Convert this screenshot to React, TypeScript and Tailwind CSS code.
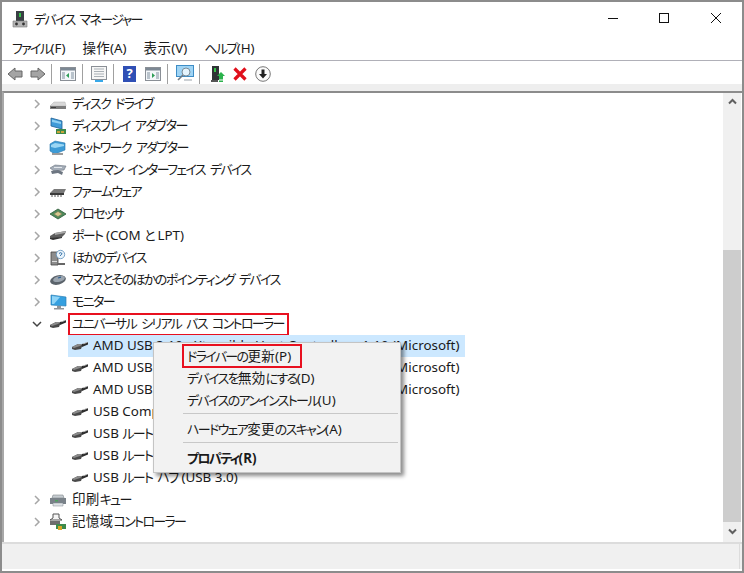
import React from "react";

const FONT = "[font-family:'Noto_Sans','Noto_Sans_CJK_JP',sans-serif] [font-feature-settings:'palt']";

/* Kana in the reference are condensed, kanji are full width, Latin is a little narrower. */
const T = ({ s }: { s: string }) => {
  const runs = s.match(/[\u3040-\u30ff]+|[\u4e00-\u9fff]+|[^\u3040-\u30ff\u4e00-\u9fff]+/g) ?? [];
  return (
    <>
      {runs.map((r, i) => {
        if (/^[\u3040-\u30ff]/.test(r))
          return (
            <span key={i} className="text-[13px] tracking-[-1.65px]">
              {r}
            </span>
          );
        if (/^[\u4e00-\u9fff]/.test(r))
          return (
            <span key={i} className="text-[13.5px] tracking-[0.3px]">
              {r}
            </span>
          );
        if (r === " ")
          return (
            <span key={i} className="text-[13.4px] [word-spacing:1.5px]">
              {r}
            </span>
          );
        return (
          <span key={i} className="text-[13.4px]">
            {r}
          </span>
        );
      })}
    </>
  );
};

const Chevron = ({ open }: { open?: boolean }) => (
  <svg width="10" height="10" viewBox="0 0 10 10" className="shrink-0">
    {open ? (
      <path d="M1 3 L5 7 L9 3" fill="none" stroke="#444" strokeWidth="1.5" />
    ) : (
      <path d="M3 1 L7 5 L3 9" fill="none" stroke="#a6a6a6" strokeWidth="1.5" />
    )}
  </svg>
);

const Usb = () => (
  <svg width="18" height="12" viewBox="0 0 18 12" className="shrink-0">
    <path d="M1 7 L7 4 L12 4 L10 9 L4 10 L1 9Z" fill="#4a4a4a" />
    <path d="M1 7 L7 4 L12 4 L9 6 L3 8Z" fill="#8a8a8a" />
    <path d="M11 4 L17 2 L17 4.5 L11 7Z" fill="#2c2c2c" />
    <path d="M12 3.4 L16.5 2 L16.5 2.8 L12 4.2Z" fill="#d0d0d0" />
  </svg>
);

const TreeIcon = ({ kind }: { kind: string }) => {
  const c = "shrink-0";
  switch (kind) {
    case "disk":
      return (
        <svg width="18" height="16" viewBox="0 0 18 16" className={c}>
          <path d="M1 10 L5 6 L16 6 L17 10Z" fill="#d8d8d8" stroke="#b5b5b5" strokeWidth=".5" />
          <path d="M1 10 H17 V13 H1Z" fill="#7d7d7d" />
          <path d="M2 11 H7 V12 H2Z" fill="#3c3c3c" />
        </svg>
      );
    case "display":
      return (
        <svg width="18" height="18" viewBox="0 0 18 18" className={c}>
          <path d="M2 1 L13 4 V12 L2 9Z" fill="#3e9bd8" stroke="#1e5f96" strokeWidth=".8" />
          <path d="M3 2.5 L12 5 V7 L3 5Z" fill="#8fd0f2" />
          <path d="M7 12 H17 V17 H7Z" fill="#3d8a4a" />
          <path d="M8 14 H11 V16 H8Z M12 14 H15 V16 H12Z" fill="#c9a43a" />
        </svg>
      );
    case "network":
      return (
        <svg width="18" height="16" viewBox="0 0 18 16" className={c}>
          <path d="M1 4 L6 1 L16 3 V10 L6 14 L1 11Z" fill="#3c9bd6" stroke="#2a77ad" strokeWidth=".6" />
          <path d="M2 5 L6 3 L15 4.5 V6 L6 8 L2 7Z" fill="#9ad6f4" />
          <path d="M3 13 H14 V15 H3Z" fill="#9b9b9b" />
        </svg>
      );
    case "hid":
      return (
        <svg width="18" height="14" viewBox="0 0 18 14" className={c}>
          <path d="M1 5 L6 2 L17 3 L15 7 L5 8Z" fill="#a4adb8" stroke="#6b7480" strokeWidth=".6" />
          <path d="M2 8 L9 7 L14 9 L13 12 L9 10 L3 11Z" fill="#6d7681" />
          <path d="M5 4 H13 V5 H5Z" fill="#e3e7ec" />
        </svg>
      );
    case "firmware":
      return (
        <svg width="18" height="12" viewBox="0 0 18 12" className={c}>
          <path d="M1 7 L5 3 L17 3 L15 7Z" fill="#7a7a7a" />
          <path d="M1 7 H15 V9 H1Z" fill="#3b3b3b" />
          <path d="M3 9 V11 M6 9 V11 M9 9 V11 M12 9 V11" stroke="#555" strokeWidth="1" />
        </svg>
      );
    case "cpu":
      return (
        <svg width="18" height="12" viewBox="0 0 18 12" className={c}>
          <path d="M1 6 L9 1 L17 6 L9 11Z" fill="#4f8a5b" stroke="#2e5c38" strokeWidth=".8" />
          <path d="M5 6 L9 3.5 L13 6 L9 8.5Z" fill="#d9c78f" stroke="#7d7450" strokeWidth=".5" />
        </svg>
      );
    case "port":
      return (
        <svg width="18" height="12" viewBox="0 0 18 12" className={c}>
          <path d="M1 6 L6 3 L17 1 L16 4 L13 7 L5 9 L1 8Z" fill="#5e5e5e" />
          <path d="M6 3 L17 1 L16 3 L6 5Z" fill="#a8a8a8" />
          <path d="M1 8 L13 7 V8 L4 10 L1 9Z" fill="#333" />
        </svg>
      );
    case "other":
      return (
        <svg width="16" height="18" viewBox="0 0 16 18" className={c}>
          <path d="M1 3 H8 V16 H1Z" fill="#8c8c8c" stroke="#444" strokeWidth=".8" />
          <path d="M2 12 H7 V13 H2Z" fill="#ddd" />
          <path d="M8 14 H15 V16 H8Z" fill="#666" />
          <circle cx="10.5" cy="5.5" r="4.2" fill="#e9f3fb" stroke="#5b8db8" strokeWidth=".8" />
          <path d="M9 4.5 Q10.5 2.8 12 4.5 Q12 5.5 10.5 6.2 V7" fill="none" stroke="#2f6ea5" strokeWidth="1" />
        </svg>
      );
    case "mouse":
      return (
        <svg width="18" height="12" viewBox="0 0 18 12" className={c}>
          <ellipse cx="9" cy="6" rx="8" ry="4.6" transform="rotate(-14 9 6)" fill="#5b636b" />
          <ellipse cx="10" cy="5" rx="6" ry="2.8" transform="rotate(-14 10 5)" fill="#9aa4ae" />
          <path d="M9 4 L12 3.2" stroke="#2f5f8f" strokeWidth="1.2" />
        </svg>
      );
    case "monitor":
      return (
        <svg width="17" height="17" viewBox="0 0 17 17" className={c}>
          <path d="M1 1 L16 3 V12 L1 11Z" fill="#35a0e0" stroke="#2c7fb5" strokeWidth=".7" />
          <path d="M2 2 L10 3 L4 10 L2 10Z" fill="#8fd4f7" />
          <path d="M7 12 H11 V14 H14 V15.5 H4 V14 H7Z" fill="#8f9499" />
        </svg>
      );
    case "printer":
      return (
        <svg width="18" height="14" viewBox="0 0 18 14" className={c}>
          <path d="M4 2 H14 L15 5 H3Z" fill="#c6ccd1" stroke="#7f868c" strokeWidth=".6" />
          <path d="M1 5 H17 V11 H1Z" fill="#7a8289" />
          <path d="M4 10 H14 V13 H4Z" fill="#dfe3e6" stroke="#7f868c" strokeWidth=".5" />
          <path d="M6 7 H9 V8.5 H6Z" fill="#4fa35e" />
        </svg>
      );
    case "storage":
      return (
        <svg width="18" height="18" viewBox="0 0 18 18" className={c}>
          <path d="M4 1 H10 V5 L13 7 H1 L4 5Z" fill="#f4f4f4" stroke="#555" strokeWidth="1" />
          <path d="M1 8 H11 V12 H1Z" fill="#6d6d6d" />
          <path d="M7 11 H17 V16 H7Z" fill="#3d8a4a" />
          <path d="M9 13 H13 V17 H9Z" fill="#d8a526" />
        </svg>
      );
    default:
      return <Usb />;
  }
};

const Row = ({ kind, label }: { kind: string; label: string }) => (
  <div className="flex h-[22px] items-center">
    <div className="flex w-[42px] justify-end pr-[4px]">
      <Chevron />
    </div>
    <div className="flex w-[24px] justify-center">
      <TreeIcon kind={kind} />
    </div>
    <span className="pb-[2px] pl-[2px] whitespace-nowrap">
      <T s={label} />
    </span>
  </div>
);

const ChildRow = ({ label, selected }: { label: string; selected?: boolean }) => (
  <div className="flex h-[22px] pl-[64px]">
    <div className={`flex w-[397px] items-center gap-[4px] pl-[3px] whitespace-nowrap ${selected ? "bg-[#cce8ff]" : ""}`}>
      <Usb />
      <span className="pb-[2px]">
        <T s={label} />
      </span>
    </div>
  </div>
);

const Sep = () => <div className="mx-[5px] h-[20px] w-px bg-[#a0a0a0]" />;

const Win = ({ side }: { side: "l" | "r" | "i" }) => (
  <svg width="16" height="14" viewBox="0 0 16 14">
    <rect x=".5" y=".5" width="15" height="13" fill="#f4f7fa" stroke="#8a8f96" />
    <rect x="1" y="1" width="14" height="2.5" fill="#7c8894" />
    <rect x="2" y="5" width="3" height="7" fill="#b9c3cc" />
    <rect x="11" y="5" width="3" height="7" fill="#b9c3cc" />
    {side === "l" && <path d="M9 6 V11 L6 8.5Z" fill="#2f9e58" />}
    {side === "r" && <path d="M7 6 V11 L10 8.5Z" fill="#2f9e58" />}
  </svg>
);

const MenuItem = ({ s, bold }: { s: string; bold?: boolean }) => (
  <div className={`flex h-[22px] items-center pt-[2px] pl-[33px] whitespace-nowrap ${bold ? "font-bold" : ""}`}>
    <span>
      <T s={s} />
    </span>
  </div>
);

export default function App() {
  return (
    <div className={`h-[573px] w-[744px] overflow-hidden border-2 border-[#8c8c8c] bg-white text-[14px] text-[#1a1a1a] ${FONT}`}>
      {/* title bar */}
      <div className="flex h-[34px] items-center">
        <svg width="16" height="18" viewBox="0 0 16 18" className="ml-[10px]">
          <rect x="4" y="1" width="8" height="10" fill="#3a3f44" />
          <rect x="7" y="3" width="2" height="4" fill="#37c24b" />
          <path d="M1 11 H15 V17 H1Z" fill="#b4b4b4" stroke="#777" strokeWidth=".6" />
          <circle cx="4.5" cy="14" r="1.4" fill="#333" />
          <circle cx="11.5" cy="14" r="1.4" fill="#333" />
        </svg>
        <span className="ml-[6px]">
          <T s="デバイス マネージャー" />
        </span>
        <div className="ml-auto flex items-center">
          <svg width="12" height="12" viewBox="0 0 12 12" className="mr-[39px] -mt-[2px]">
            <path d="M1 6.5 H11" stroke="#111" strokeWidth="1" />
          </svg>
          <svg width="12" height="12" viewBox="0 0 12 12" className="mr-[40px] -mt-[2px]">
            <rect x="1.5" y="1.5" width="9" height="9" fill="none" stroke="#111" />
          </svg>
          <svg width="12" height="12" viewBox="0 0 12 12" className="mr-[20px] -mt-[2px]">
            <path d="M1 1 L11 11 M11 1 L1 11" stroke="#111" strokeWidth="1" />
          </svg>
        </div>
      </div>
      {/* menu */}
      <div className="flex h-[25px] items-center gap-[17px] border-b border-[#b0b0b8] pl-[10px]">
        <span><T s="ファイル(F)" /></span>
        <span><T s="操作(A)" /></span>
        <span><T s="表示(V)" /></span>
        <span><T s="ヘルプ(H)" /></span>
      </div>
      {/* toolbar */}
      <div className="flex h-[23px] items-center pl-[5px] pt-[2px]">
        <svg width="16" height="14" viewBox="0 0 16 14"><path d="M1 7 L8 1 V4 H15 V10 H8 V13Z" fill="#a4a4a4" stroke="#666" /></svg>
        <svg width="16" height="14" viewBox="0 0 16 14" className="ml-[7px]"><path d="M15 7 L8 1 V4 H1 V10 H8 V13Z" fill="#a4a4a4" stroke="#666" /></svg>
        <Sep />
        <div className="ml-[3px]"><Win side="l" /></div>
        <div className="ml-[1px]"><Sep /></div>
        <svg width="16" height="16" viewBox="0 0 16 16" className="ml-[3px]">
          <rect x=".5" y=".5" width="15" height="13" fill="#f6f6f6" stroke="#8a8f96" />
          <path d="M3 3 H13 M3 5.5 H13 M3 8 H13 M3 10.5 H13" stroke="#a9b0b6" />
          <path d="M4 14 H12 V16 H4Z" fill="#38a8e8" />
        </svg>
        <div className="ml-[1px]"><Sep /></div>
        <div className="ml-[4px] flex h-[16px] w-[13px] items-center justify-center bg-[#2f4fb5] text-[13px] leading-none font-bold text-white">?</div>
        <div className="ml-[9px]"><Win side="r" /></div>
        <div className="ml-[1px]"><Sep /></div>
        <svg width="18" height="17" viewBox="0 0 18 17" className="ml-[3px]">
          <rect x=".5" y=".5" width="17" height="11" fill="#9fd4f5" stroke="#3e8dc6" />
          <circle cx="10" cy="7" r="4" fill="#e5f4fd" stroke="#7b8b97" />
          <path d="M7 10 L2 15" stroke="#6f7a84" strokeWidth="1.6" />
          <path d="M8 15 H16" stroke="#9aa2a9" />
        </svg>
        <Sep />
        <svg width="14" height="16" viewBox="0 0 14 16" className="ml-[6px]">
          <rect x="1" y="0" width="7" height="14" fill="#2f3336" />
          <rect x="3" y="2" width="2" height="4" fill="#37c24b" />
          <path d="M10 6 L14 10 H12 V13 H8 V10 H6Z" fill="#2bb24c" />
          <path d="M0 14 H7 V16 H0Z" fill="#555" />
          <path d="M8 14 H12 M8 15.5 H12" stroke="#2bb24c" />
        </svg>
        <svg width="14" height="14" viewBox="0 0 14 14" className="ml-[8px]">
          <path d="M1.5 1.5 L12.5 12.5 M12.5 1.5 L1.5 12.5" stroke="#e0101c" strokeWidth="3.2" />
        </svg>
        <svg width="16" height="16" viewBox="0 0 16 16" className="ml-[8px]">
          <circle cx="8" cy="8" r="7.3" fill="#fbfbfb" stroke="#777" />
          <path d="M6.5 3.5 H9.5 V8 H12 L8 12.5 L4 8 H6.5Z" fill="#222" />
        </svg>
      </div>
      {/* band */}
      <div className="h-[7px] bg-[#eeeeee]" />
      {/* tree area */}
      <div className="relative flex h-[451px] border-t-2 border-l-2 border-t-[#8c8c8c] border-l-[#a8a8a8]">
        <div className="min-w-0 flex-1 overflow-hidden">
          <Row kind="disk" label="ディスク ドライブ" />
          <Row kind="display" label="ディスプレイ アダプター" />
          <Row kind="network" label="ネットワーク アダプター" />
          <Row kind="hid" label="ヒューマン インターフェイス デバイス" />
          <Row kind="firmware" label="ファームウェア" />
          <Row kind="cpu" label="プロセッサ" />
          <Row kind="port" label="ポート (COM と LPT)" />
          <Row kind="other" label="ほかのデバイス" />
          <Row kind="mouse" label="マウスとそのほかのポインティング デバイス" />
          <Row kind="monitor" label="モニター" />
          <div className="flex h-[22px] items-center">
            <div className="flex w-[42px] justify-end pr-[4px]">
              <Chevron open />
            </div>
            <div className="flex w-[24px] justify-center">
              <Usb />
            </div>
            <span className="-ml-[2px] flex h-[23px] w-[221px] shrink-0 items-center border-2 border-[#e8101f] pb-[2px] pl-[2px] whitespace-pre">
              <span>
                <T s="ユニバーサル シリアル バス コントローラー" />
              </span>
            </span>
          </div>
          <ChildRow selected label="AMD USB 3.10 eXtensible Host Controller - 1.10 (Microsoft)" />
          <ChildRow label="AMD USB 3.10 eXtensible Host Controller - 1.10 (Microsoft)" />
          <ChildRow label="AMD USB 3.10 eXtensible Host Controller - 1.10 (Microsoft)" />
          <ChildRow label="USB Composite Device" />
          <ChildRow label="USB ルート ハブ (USB 3.0)" />
          <ChildRow label="USB ルート ハブ (USB 3.0)" />
          <ChildRow label="USB ルート ハブ (USB 3.0)" />
          <Row kind="printer" label="印刷キュー" />
          <Row kind="storage" label="記憶域コントローラー" />
        </div>
        {/* scrollbar */}
        <div className="mr-[1px] flex w-[18px] flex-col bg-[#f0f0f0]">
          <div className="flex h-[17px] items-center justify-center">
            <svg width="9" height="7" viewBox="0 0 9 7"><path d="M1 5.5 L4.5 2 L8 5.5" fill="none" stroke="#606060" strokeWidth="2" /></svg>
          </div>
          <div className="mt-[140px] h-[272px] bg-[#cdcdcd]" />
          <div className="flex h-[19px] items-center justify-center">
            <svg width="9" height="7" viewBox="0 0 9 7"><path d="M1 1.5 L4.5 5 L8 1.5" fill="none" stroke="#606060" strokeWidth="2" /></svg>
          </div>
        </div>
        {/* context menu */}
        <div className="absolute top-[249px] left-[149px] h-[131px] w-[248px] border border-[#c4c4c4] bg-[#f2f2f2] py-[1px] shadow-[3px_3px_4px_rgba(0,0,0,0.45)]">
          <div className="relative">
            <MenuItem s="ドライバーの更新(P)" />
            <div className="absolute top-[0px] left-[28px] h-[24px] w-[120px] border-2 border-[#e8101f]" />
          </div>
          <MenuItem s="デバイスを無効にする(D)" />
          <MenuItem s="デバイスのアンインストール(U)" />
          <div className="my-[3px] ml-[29px] mr-[2px] h-px bg-[#c8c8c8]" />
          <MenuItem s="ハードウェア変更のスキャン(A)" />
          <div className="my-[3px] ml-[29px] mr-[2px] h-px bg-[#c8c8c8]" />
          <MenuItem s="プロパティ(R)" bold />
        </div>
      </div>
      {/* status */}
      <div className="flex h-[27px] justify-end border-t-2 border-[#dcdcdc] bg-[#f0f0f0]">
        <div className="mr-[2px] h-full w-px bg-[#dcdcdc]" />
      </div>
    </div>
  );
}
